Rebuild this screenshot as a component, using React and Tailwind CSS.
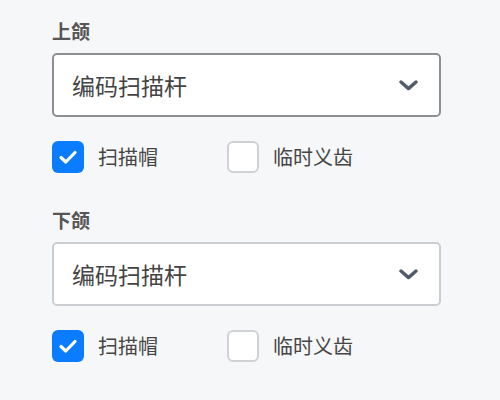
import React from "react";

const font = { fontFamily: '"Noto Sans CJK SC", "Noto Sans", sans-serif' };

function Chevron() {
  return (
    <svg width="19" height="11" viewBox="0 0 19 11" fill="none">
      <path d="M2 2 L9.5 8.6 L17 2" stroke="#525b68" strokeWidth="3.4" strokeLinecap="round" strokeLinejoin="round" />
    </svg>
  );
}

function Checkbox({ checked, label }) {
  return (
    <div className={checked ? "flex items-center gap-[14px] w-[175px]" : "flex items-center gap-[14px]"}>
      {checked ? (
        <div className="w-8 h-8 rounded-[6px] bg-[#0a7cff] flex items-center justify-center">
          <svg width="20" height="16" viewBox="0 0 20 16" fill="none">
            <path d="M3 8.5 L7.8 13 L17 3.5" stroke="#ffffff" strokeWidth="3.2" strokeLinecap="round" strokeLinejoin="round" />
          </svg>
        </div>
      ) : (
        <div className="w-8 h-8 rounded-[6px] border-2 border-[#cfd1d4] bg-white" />
      )}
      <span className="text-[20px] leading-8 text-[#454545]">{label}</span>
    </div>
  );
}

function Section({ title, focused, top }) {
  return (
    <div className={top}>
      <div className="text-[19px] leading-6 font-bold text-[#565656]">{title}</div>
      <div
        className={
          "mt-[10px] w-[389px] h-16 rounded-[5px] bg-white border-2 flex items-center justify-between pl-[18px] pr-[21px] " +
          (focused ? "border-[#8d8f93]" : "border-[#cacdd2]")
        }
      >
        <span className="text-[23px] text-[#444444]">编码扫描杆</span>
        <Chevron />
      </div>
      <div className="mt-6 flex items-center">
        <Checkbox checked label="扫描帽" />
        <Checkbox checked={false} label="临时义齿" />
      </div>
    </div>
  );
}

export default function App() {
  return (
    <div className="w-[500px] h-[400px] bg-[#f6f7f8] pl-[52px]" style={font}>
      <Section title="上颌" focused top="pt-[19px]" />
      <Section title="下颌" focused={false} top="pt-[35px]" />
    </div>
  );
}
